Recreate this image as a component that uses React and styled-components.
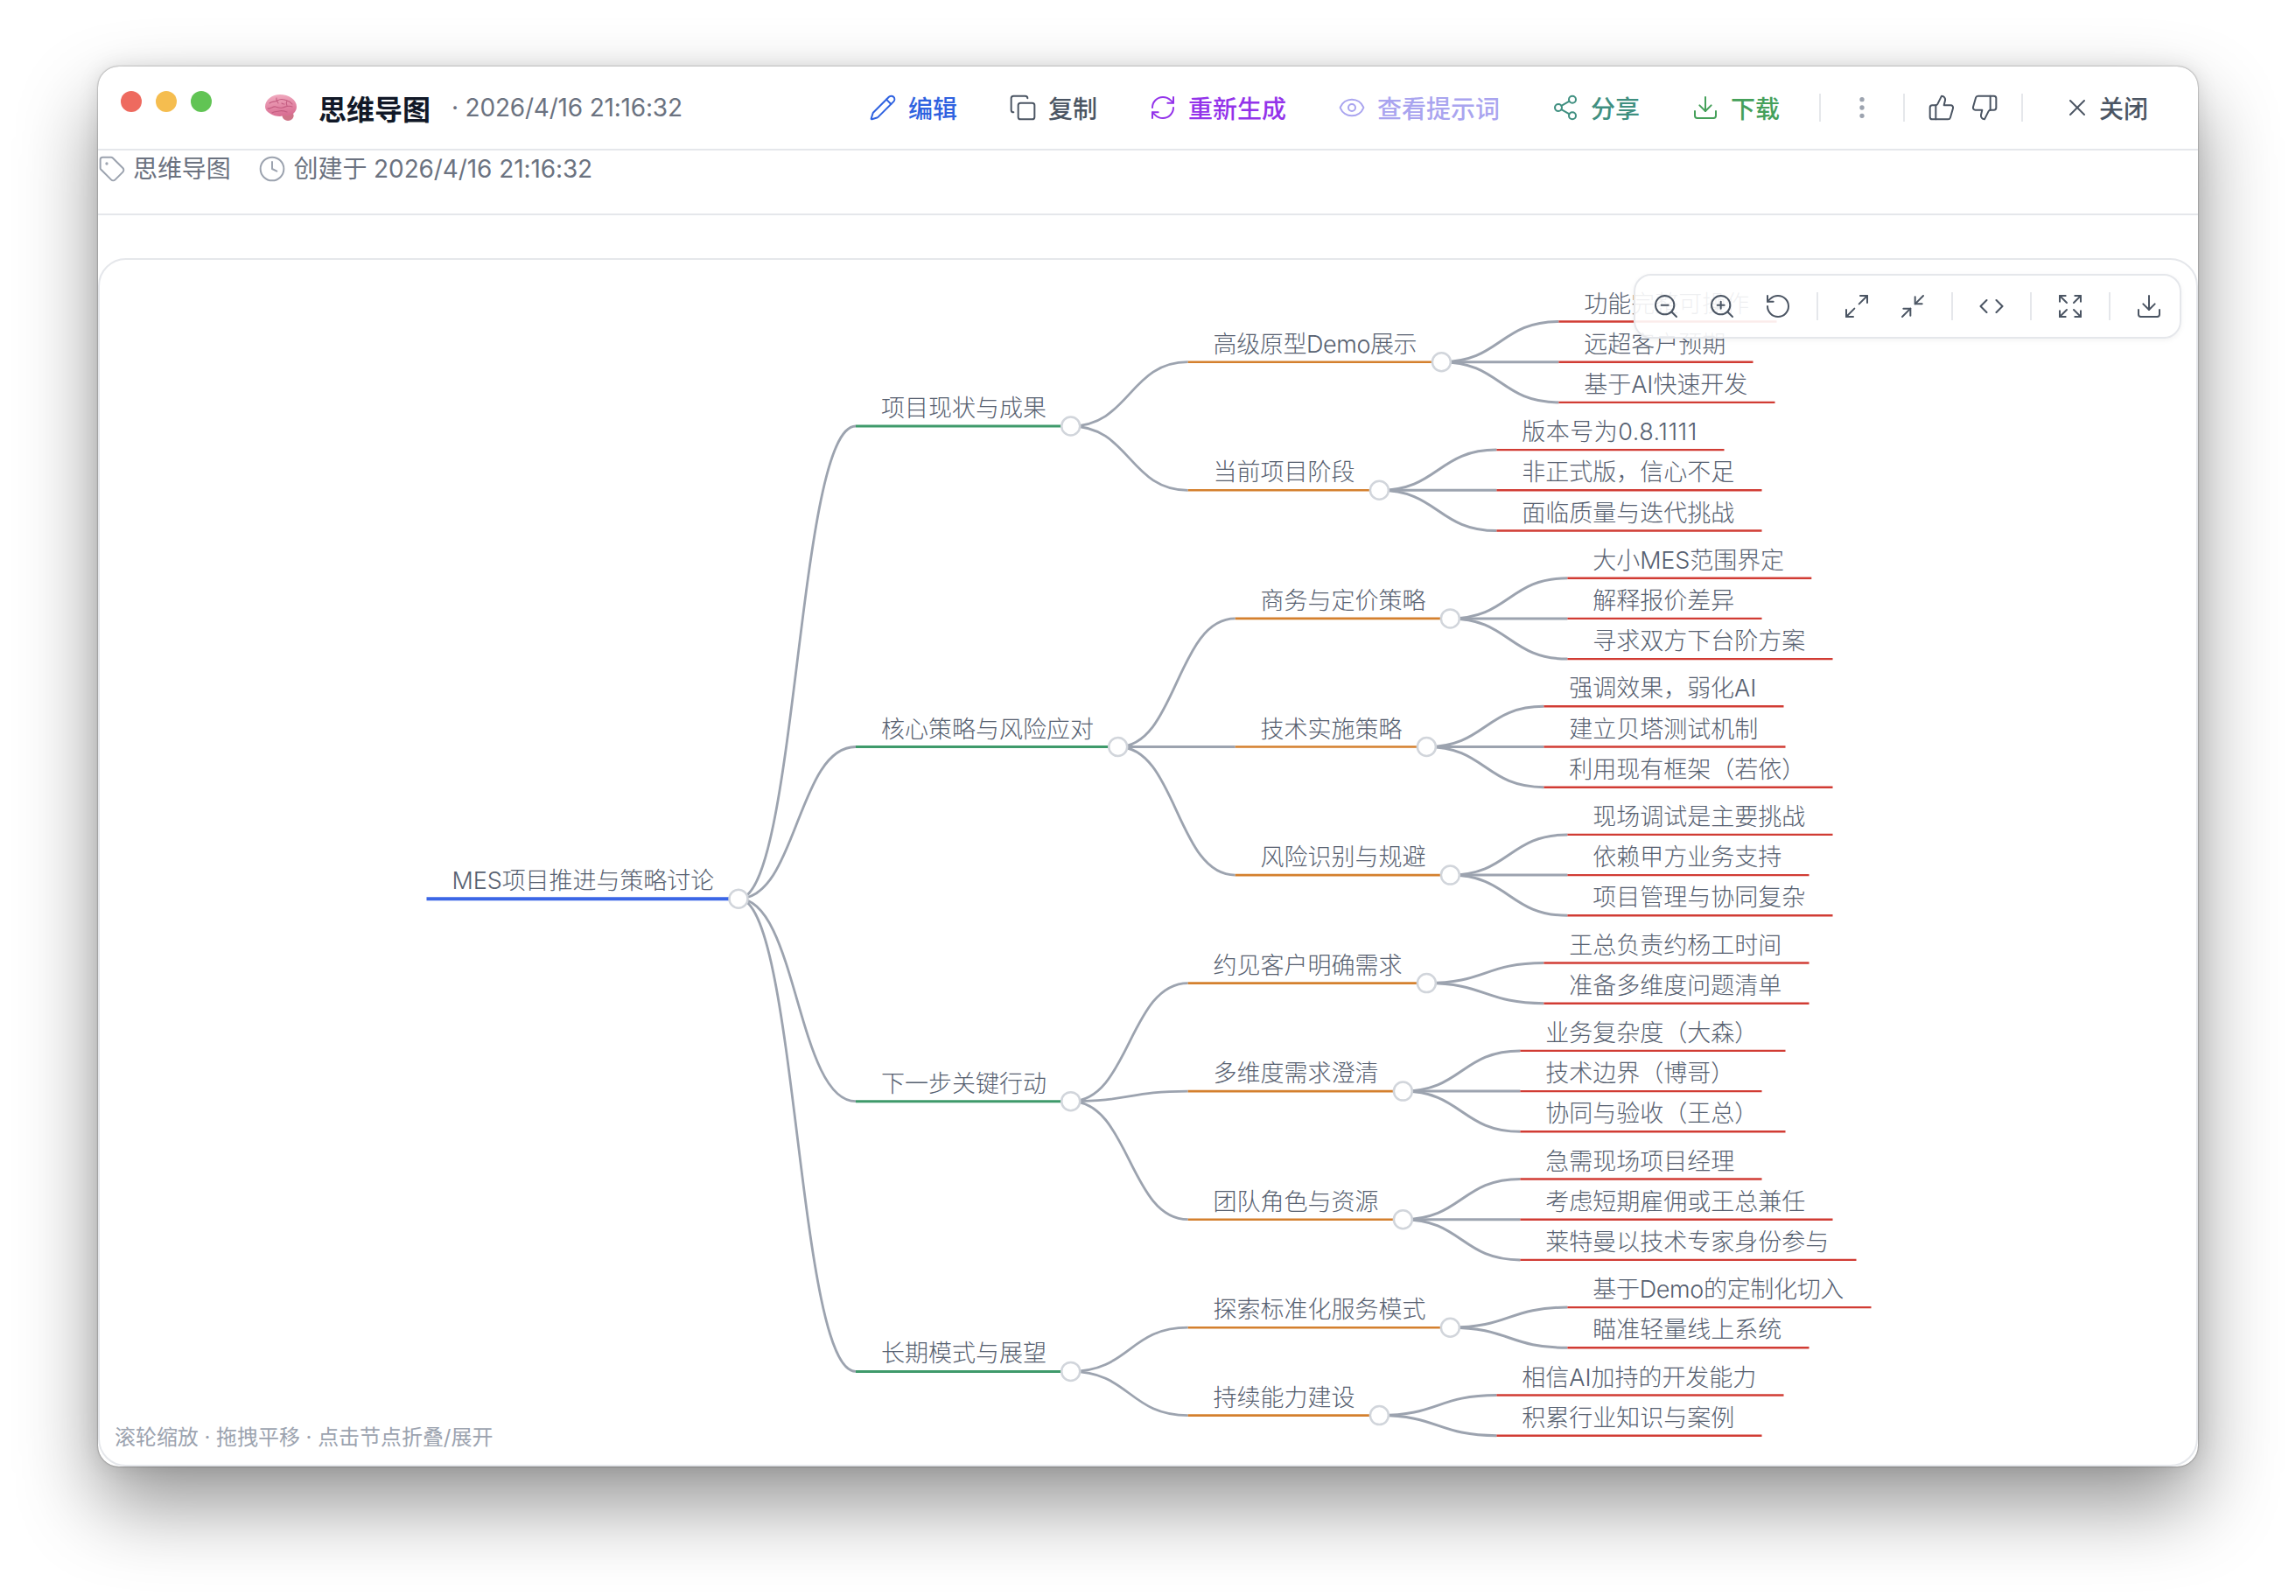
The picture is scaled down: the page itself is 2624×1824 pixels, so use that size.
import React from 'react'
import styled, { createGlobalStyle } from 'styled-components'
import {
  Pencil, Copy, RefreshCw, Eye, Share2, Download, EllipsisVertical, ThumbsUp, ThumbsDown, X,
  Tag, Clock, ZoomOut, ZoomIn, RotateCcw, Maximize2, Minimize2, ChevronLeft, ChevronRight, Expand,
} from 'lucide-react'

const GlobalStyle = createGlobalStyle`
  html, body { margin: 0; padding: 0; background: #fff; }
  body { font-family: Inter, "Noto Sans CJK SC", sans-serif; }
`

const Page = styled.div`
  width: 2624px;
  height: 1824px;
  padding: 76px 112px 0;
  box-sizing: border-box;
  background: #fff;
  overflow: hidden;
`

const Window = styled.div`
  width: 2400px;
  height: 1600px;
  display: flex;
  flex-direction: column;
  background: #fff;
  border-radius: 24px;
  overflow: hidden;
  box-shadow: 0 44px 90px rgba(0, 0, 0, 0.42), 0 0 24px rgba(0, 0, 0, 0.1), 0 0 2px rgba(0, 0, 0, 0.55);
`

const Header = styled.header`
  height: 96px;
  flex: none;
  display: flex;
  align-items: center;
  padding: 0 28px 0 26px;
  box-sizing: border-box;
  border-bottom: 2px solid #e5e7eb;
`

const Lights = styled.div`
  display: flex;
  gap: 16px;
  margin: 0 60px 14px 0;
`

const Light = styled.span`
  width: 24px;
  height: 24px;
  border-radius: 50%;
  background: ${p => p.color};
`

const TitleIcon = styled.svg`
  width: 38px;
  height: 32px;
  margin-right: 24px;
  flex: none;
`

const Title = styled.span`
  font-size: 32px;
  font-weight: 700;
  color: #111827;
  margin-right: 24px;
`

const Stamp = styled.span`
  font-size: 28px;
  letter-spacing: -0.2px;
  color: #6b7280;
`

const Actions = styled.div`
  margin-left: auto;
  display: flex;
  align-items: center;
`

const Action = styled.div`
  display: flex;
  align-items: center;
  gap: ${p => p.gap || 13}px;
  padding: 8px 29px 8px 30px;
  font-size: 28px;
  font-weight: 500;
  color: ${p => p.color};
`

const Rule = styled.span`
  width: 2px;
  height: 32px;
  margin: 0 16px;
  background: #e5e7eb;
  flex: none;
`

const MoreButton = styled.div`
  width: 62px;
  display: flex;
  justify-content: center;
  color: #9ca3af;
`

const Thumbs = styled.div`
  display: flex;
  gap: 17px;
  padding: 0 10px;
  color: #4b5563;
`

const MetaRow = styled.div`
  height: 74px;
  flex: none;
  display: flex;
  gap: 31px;
  box-sizing: border-box;
  border-bottom: 2px solid #e5e7eb;
  font-size: 28px;
  line-height: 42px;
  color: #6b7280;
`

const MetaItem = styled.div`
  display: flex;
  align-items: center;
  height: 42px;
  gap: ${p => p.gap}px;
  letter-spacing: -0.1px;
  svg { color: #9ca3af; }
`

const Body = styled.main`
  flex: 1;
  display: flex;
  padding-top: 49px;
  min-height: 0;
`

const Canvas = styled.section`
  flex: 1;
  position: relative;
  border: 2px solid #e5e7eb;
  border-radius: 32px;
  background: #fff;
  overflow: hidden;
`

const MapSvg = styled.svg`
  display: block;
  width: 100%;
  height: 100%;
`

const Link = styled.path`
  fill: none;
  stroke: #9ca3af;
  stroke-width: ${p => p.w};
`

const Underline = styled.line`
  stroke: ${p => p.color};
  stroke-width: ${p => p.w};
`

const Knob = styled.circle`
  fill: #fff;
  stroke: #d1d5db;
  stroke-width: 2.5;
`

const Label = styled.text`
  font-family: Inter, "Noto Sans CJK SC", sans-serif;
  font-size: 27px;
  font-weight: 300;
  fill: #566070;
`

const ZoomBar = styled.div`
  position: absolute;
  top: 16px;
  right: 17px;
  display: flex;
  align-items: center;
  gap: 8px;
  height: 74px;
  padding: 0 7px;
  box-sizing: border-box;
  border: 2px solid #e5e7eb;
  border-radius: 20px;
  background: rgba(255, 255, 255, 0.9);
  box-shadow: 0 2px 6px rgba(0, 0, 0, 0.05);
  color: #4b5563;
`

const ZoomButton = styled.div`
  width: 56px;
  display: flex;
  justify-content: center;
`

const CodeGlyph = styled.div`
  display: flex;
  svg { margin: 0 -5px; }
`

const ZoomRule = styled.span`
  width: 2px;
  height: 32px;
  margin: 0 8px;
  background: #e5e7eb;
`

const Hint = styled.div`
  position: absolute;
  left: 17px;
  bottom: 16px;
  font-size: 24px;
  letter-spacing: -0.05px;
  color: #9ca3af;
`

const tree = {
  t: 'MES项目推进与策略讨论',
  c: [
    { t: '项目现状与成果', c: [
      { t: '高级原型Demo展示', c: [{ t: '功能完整可操作' }, { t: '远超客户预期' }, { t: '基于AI快速开发' }] },
      { t: '当前项目阶段', c: [{ t: '版本号为0.8.1111' }, { t: '非正式版，信心不足' }, { t: '面临质量与迭代挑战' }] },
    ] },
    { t: '核心策略与风险应对', c: [
      { t: '商务与定价策略', c: [{ t: '大小MES范围界定' }, { t: '解释报价差异' }, { t: '寻求双方下台阶方案' }] },
      { t: '技术实施策略', c: [{ t: '强调效果，弱化AI' }, { t: '建立贝塔测试机制' }, { t: '利用现有框架（若依）' }] },
      { t: '风险识别与规避', c: [{ t: '现场调试是主要挑战' }, { t: '依赖甲方业务支持' }, { t: '项目管理与协同复杂' }] },
    ] },
    { t: '下一步关键行动', c: [
      { t: '约见客户明确需求', c: [{ t: '王总负责约杨工时间' }, { t: '准备多维度问题清单' }] },
      { t: '多维度需求澄清', c: [{ t: '业务复杂度（大森）' }, { t: '技术边界（博哥）' }, { t: '协同与验收（王总）' }] },
      { t: '团队角色与资源', c: [{ t: '急需现场项目经理' }, { t: '考虑短期雇佣或王总兼任' }, { t: '莱特曼以技术专家身份参与' }] },
    ] },
    { t: '长期模式与展望', c: [
      { t: '探索标准化服务模式', c: [{ t: '基于Demo的定制化切入' }, { t: '瞄准轻量线上系统' }] },
      { t: '持续能力建设', c: [{ t: '相信AI加持的开发能力' }, { t: '积累行业知识与案例' }] },
    ] },
  ],
}

const depthStyle = [
  { color: '#3b66e6', w: 4 },
  { color: '#3f9a6b', w: 3 },
  { color: '#d4802e', w: 2.6 },
  { color: '#d13c34', w: 2.4 },
]

const latin = { D: 19, e: 15, m: 22, o: 15, A: 18, I: 7, M: 23, E: 16.8, S: 17, '.': 7, '1': 11.5, '0': 16, '8': 16 }
const textWidth = s => [...s].reduce((sum, ch) => sum + (latin[ch] || 27), 0)

// leaves step by 46.2, one more 8 between groups; parents centre on their children
function layout(node, x, depth, cursor, out) {
  const text = textWidth(node.t)
  const width = text + 56.7
  const item = { ...node, x, depth, text, width }
  out.push(item)
  if (node.c) {
    const kids = node.c.map(child => layout(child, x + width + 134, depth + 1, cursor, out))
    if (depth === 2) cursor.y += 8
    item.kids = kids
    item.y = (kids[0].y + kids[kids.length - 1].y) / 2
  } else {
    item.width += 3.4
    item.y = cursor.y
    cursor.y += 46.2
  }
  return item
}

const nodes = []
layout(tree, 487.5, 0, { y: 367.5 }, nodes)

const curve = (from, to) => {
  const sx = from.x + from.width
  const mid = (sx + to.x) / 2
  return `M${sx},${from.y}C${mid},${from.y} ${mid},${to.y} ${to.x},${to.y}`
}

const MindMap = () => (
  <MapSvg viewBox="114 297 2396 1377">
    {nodes.filter(n => n.kids).flatMap(n => n.kids.map(k => (
      <Link key={k.t} d={curve(n, k)} w={n.depth === 2 ? 3 : 2.8} />
    )))}
    {nodes.map(n => (
      <g key={n.t}>
        <Underline x1={n.x} y1={n.y} x2={n.x + n.width} y2={n.y} {...depthStyle[n.depth]} />
        <Label x={n.x + 28.9} y={n.y - 11} textLength={n.text} lengthAdjust="spacing">{n.t}</Label>
        {n.kids && <Knob cx={n.x + n.width} cy={n.y} r={10.5} />}
      </g>
    ))}
  </MapSvg>
)

const BrainIcon = () => (
  <TitleIcon viewBox="0 0 38 32">
    <defs>
      <linearGradient id="brainFill" x1="0" y1="0" x2="0.2" y2="1">
        <stop offset="0" stopColor="#f2aec2" />
        <stop offset="1" stopColor="#d96f93" />
      </linearGradient>
    </defs>
    <path d="M21 23c2-1 10-2 12 0 2 3-1 8-6 8-4 0-8-4-6-8z" fill="#cf7488" />
    <path d="M1 15C1 7 9 1 18 1c10 0 19 6 19 14 0 6-5 10-10 10-3 0-6 0-9 1-4 0-8-1-11-3-4-2-6-5-6-8z" fill="url(#brainFill)" />
    <path d="M6 11c3-3 6-1 9-3s5-2 8-1 6 1 9 5M4 17c3 1 6-3 9-2s4 2 8 1 6-3 11-1M9 22c3-2 5-1 8-2s6 0 9 1M14 5c-1 2 1 4 2 6M26 8c-1 2-1 4 0 6M20 11c1 1 2 1 3 1" fill="none" stroke="#c35c80" strokeWidth="1.1" strokeLinecap="round" />
  </TitleIcon>
)

const icon = { size: 32, strokeWidth: 1.5 }

const App = () => (
  <Page>
    <GlobalStyle />
    <Window>
      <Header>
        <Lights>
          <Light color="#ee6a5f" />
          <Light color="#f5bd4f" />
          <Light color="#61c454" />
        </Lights>
        <BrainIcon />
        <Title>思维导图</Title>
        <Stamp>· 2026/4/16 21:16:32</Stamp>
        <Actions>
          <Action color="#2f62e0"><Pencil {...icon} />编辑</Action>
          <Action color="#4b5563"><Copy {...icon} />复制</Action>
          <Action color="#9333ea"><RefreshCw {...icon} />重新生成</Action>
          <Action color="#a9a4ef"><Eye {...icon} />查看提示词</Action>
          <Action color="#3f8f80"><Share2 {...icon} />分享</Action>
          <Action color="#45a05a"><Download {...icon} />下载</Action>
          <Rule />
          <MoreButton><EllipsisVertical size={32} strokeWidth={2} /></MoreButton>
          <Rule />
          <Thumbs>
            <ThumbsUp {...icon} />
            <ThumbsDown {...icon} />
          </Thumbs>
          <Rule />
          <Action color="#4b5563" gap={9}><X {...icon} />关闭</Action>
        </Actions>
      </Header>
      <MetaRow>
        <MetaItem gap={8}><Tag {...icon} />思维导图</MetaItem>
        <MetaItem gap={9}><Clock {...icon} />创建于 2026/4/16 21:16:32</MetaItem>
      </MetaRow>
      <Body>
        <Canvas>
          <MindMap />
          <ZoomBar>
            <ZoomButton><ZoomOut {...icon} /></ZoomButton>
            <ZoomButton><ZoomIn {...icon} /></ZoomButton>
            <ZoomButton><RotateCcw {...icon} /></ZoomButton>
            <ZoomRule />
            <ZoomButton><Maximize2 {...icon} /></ZoomButton>
            <ZoomButton><Minimize2 {...icon} /></ZoomButton>
            <ZoomRule />
            <ZoomButton>
              <CodeGlyph>
                <ChevronLeft size={28} strokeWidth={1.8} />
                <ChevronRight size={28} strokeWidth={1.8} />
              </CodeGlyph>
            </ZoomButton>
            <ZoomRule />
            <ZoomButton><Expand {...icon} /></ZoomButton>
            <ZoomRule />
            <ZoomButton><Download {...icon} /></ZoomButton>
          </ZoomBar>
          <Hint>滚轮缩放 · 拖拽平移 · 点击节点折叠/展开</Hint>
        </Canvas>
      </Body>
    </Window>
  </Page>
)

export default App
